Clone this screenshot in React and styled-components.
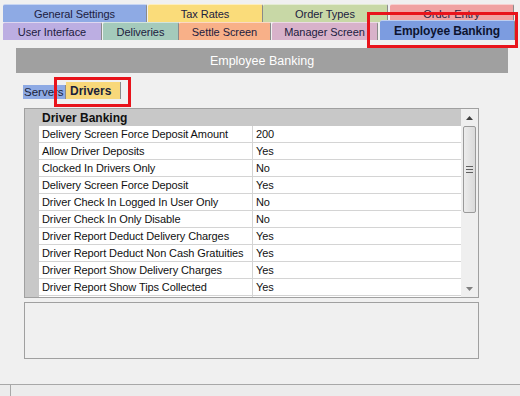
import React from "react";
import styled, { createGlobalStyle } from "styled-components";

const GlobalStyle = createGlobalStyle`
  body {
    margin: 0;
    background: #f0f0f0;
    font-family: "Liberation Sans", Arial, sans-serif;
  }
`;

const Page = styled.div`
  width: 520px;
  height: 396px;
  overflow: hidden;
  background: #f0f0f0;
  display: flex;
  flex-direction: column;
  position: relative;
`;

const TabStrip = styled.div`
  padding: 4px 0 0 3px;
  display: flex;
  flex-direction: column;
`;

const TabRow = styled.div`
  display: flex;
  align-items: flex-end;
  height: 18px;
`;

const Tab = styled.div`
  box-sizing: border-box;
  width: ${p => p.w}px;
  margin-left: ${p => p.gap || 0}px;
  height: ${p => (p.active ? 20 : 18)}px;
  margin-top: ${p => (p.active ? -2 : 0)}px;
  background: ${p => p.bg};
  border-right: 1px solid #8a8a8a;
  border-top: 1px solid rgba(255, 255, 255, 0.5);
  border-radius: 2px 2px 0 0;
  display: flex;
  align-items: center;
  justify-content: center;
  font-size: ${p => (p.active ? 12 : 11)}px;
  letter-spacing: ${p => (p.active ? "-0.1px" : "-0.05px")};
  font-weight: ${p => (p.active ? "bold" : "normal")};
  color: ${p => (p.active ? "#0d1430" : "#1c2040")};
  white-space: nowrap;
`;

const Marker = styled.div`
  position: absolute;
  left: ${p => p.x}px;
  top: ${p => p.y}px;
  width: ${p => p.w}px;
  height: ${p => p.h}px;
  border: 3px solid #e8131b;
  box-sizing: border-box;
  pointer-events: none;
`;

const Body = styled.div`
  padding: 8px 12px 0 16px;
  display: flex;
  flex-direction: column;
`;

const TitleBar = styled.div`
  height: 25px;
  background: #a0a0a0;
  color: #fff;
  font-size: 12.5px;
  display: flex;
  align-items: center;
  justify-content: center;
`;

const SubTabs = styled.div`
  margin: 9px 0 0 7px;
  display: flex;
  align-items: flex-end;
  height: 17px;
`;

const SubTab = styled.div`
  box-sizing: border-box;
  width: ${p => p.w}px;
  height: ${p => (p.active ? 17 : 14)}px;
  background: ${p => p.bg};
  border-right: 1px solid #8a8a8a;
  font-size: ${p => (p.active ? 12 : 11.5)}px;
  font-weight: ${p => (p.active ? "bold" : "normal")};
  color: #1a1f3a;
  display: flex;
  align-items: center;
  padding-left: ${p => (p.active ? 4 : 1)}px;
  white-space: nowrap;
  overflow: hidden;
`;

const Grid = styled.div`
  margin: 9px 0 0 8px;
  width: 455px;
  height: 190px;
  box-sizing: border-box;
  border: 1px solid #a0a0a0;
  display: flex;
  background: #fff;
  overflow: hidden;
`;

const Gutter = styled.div`
  width: 14px;
  background: #c8c8c8;
  flex-shrink: 0;
`;

const Cells = styled.div`
  flex: 1;
  display: flex;
  flex-direction: column;
`;

const HeaderRow = styled.div`
  height: 17px;
  background: #c8c8c8;
  font-size: 12px;
  font-weight: bold;
  color: #111;
  display: flex;
  align-items: center;
  padding-left: 3px;
  flex-shrink: 0;
`;

const Row = styled.div`
  height: 17px;
  box-sizing: border-box;
  border-bottom: 1px solid #d4d4d4;
  display: grid;
  grid-template-columns: 214px 1fr;
  font-size: 11px;
  letter-spacing: -0.1px;
  color: #111;
  flex-shrink: 0;
`;

const Cell = styled.div`
  padding-left: 3px;
  border-right: ${p => (p.value ? "none" : "1px solid #d4d4d4")};
  display: flex;
  align-items: center;
  white-space: nowrap;
  overflow: hidden;
`;

const ScrollBar = styled.div`
  width: 17px;
  flex-shrink: 0;
  background: #efefef;
  display: flex;
  flex-direction: column;
  align-items: center;
`;

const Arrow = styled.div`
  height: 17px;
  width: 17px;
  display: flex;
  align-items: center;
  justify-content: center;
  flex-shrink: 0;
`;

const Thumb = styled.div`
  width: 13px;
  height: 87px;
  box-sizing: border-box;
  border: 1px solid #9a9a9a;
  border-radius: 2px;
  background: linear-gradient(to right, #ececec, #dadada);
  display: flex;
  align-items: center;
  justify-content: center;
`;

const Track = styled.div`
  flex: 1;
`;

const Notes = styled.div`
  margin: 4px 0 0 8px;
  width: 455px;
  height: 57px;
  box-sizing: border-box;
  border: 1px solid #a0a0a0;
`;

const StatusBar = styled.div`
  position: absolute;
  left: 0;
  right: 0;
  bottom: 0;
  height: 11px;
  border-top: 1px solid #a8a8a8;
  background: #ececec;
  display: flex;
`;

const StatusCell = styled.div`
  width: 10px;
  border-right: 1px solid #a8a8a8;
`;

const topTabs = [
  { label: "General Settings", w: 144, bg: "#8eaae4" },
  { label: "Tax Rates", w: 115, bg: "#fadc7a", gap: 1 },
  { label: "Order Types", w: 125, bg: "#c8d8a6" },
  { label: "Order Entry", w: 124, bg: "#f0a2a2", gap: 2 },
];

const bottomTabs = [
  { label: "User Interface", w: 99, bg: "#bcaee2" },
  { label: "Deliveries", w: 76, bg: "#a4cabb", gap: 1 },
  { label: "Settle Screen", w: 92, bg: "#f8b088" },
  { label: "Manager Screen", w: 106, bg: "#d8b2ca", gap: 1 },
  { label: "Employee Banking", w: 135, bg: "#7c9ce0", gap: 2, active: true },
];

const rows = [
  ["Delivery Screen Force Deposit Amount", "200"],
  ["Allow Driver Deposits", "Yes"],
  ["Clocked In Drivers Only", "No"],
  ["Delivery Screen Force Deposit", "Yes"],
  ["Driver Check In Logged In User Only", "No"],
  ["Driver Check In Only Disable", "No"],
  ["Driver Report Deduct Delivery Charges", "Yes"],
  ["Driver Report Deduct Non Cash Gratuities", "Yes"],
  ["Driver Report Show Delivery Charges", "Yes"],
  ["Driver Report Show Tips Collected", "Yes"],
  ["", ""],
];

const UpIcon = () => (
  <svg width="7" height="4" viewBox="0 0 7 4">
    <path d="M0 4 L3.5 0 L7 4 Z" fill="#404040" />
  </svg>
);

const DownIcon = () => (
  <svg width="7" height="4" viewBox="0 0 7 4">
    <path d="M0 0 L3.5 4 L7 0 Z" fill="#808080" />
  </svg>
);

const Grip = () => (
  <svg width="7" height="7" viewBox="0 0 7 7">
    <path d="M0 0.5 H7 M0 3.5 H7 M0 6.5 H7" stroke="#606060" strokeWidth="1" />
  </svg>
);

export default function App() {
  return (
    <Page>
      <GlobalStyle />
      <TabStrip>
        <TabRow>
          {topTabs.map(t => (
            <Tab key={t.label} w={t.w} bg={t.bg} gap={t.gap}>
              {t.label}
            </Tab>
          ))}
        </TabRow>
        <TabRow>
          {bottomTabs.map(t => (
            <Tab key={t.label} w={t.w} bg={t.bg} gap={t.gap} active={t.active}>
              {t.label}
            </Tab>
          ))}
        </TabRow>
      </TabStrip>
      <Body>
        <TitleBar>Employee Banking</TitleBar>
        <SubTabs>
          <SubTab w={43} bg="#8eaae4">Servers</SubTab>
          <SubTab w={55} bg="#f8d87a" active>Drivers</SubTab>
        </SubTabs>
        <Grid>
          <Gutter />
          <Cells>
            <HeaderRow>Driver Banking</HeaderRow>
            {rows.map(([name, value], i) => (
              <Row key={i}>
                <Cell>{name}</Cell>
                <Cell value>{value}</Cell>
              </Row>
            ))}
          </Cells>
          <ScrollBar>
            <Arrow><UpIcon /></Arrow>
            <Thumb><Grip /></Thumb>
            <Track />
            <Arrow><DownIcon /></Arrow>
          </ScrollBar>
        </Grid>
        <Notes />
      </Body>
      <StatusBar>
        <StatusCell />
      </StatusBar>
      <Marker x={367} y={12} w={151} h={36} />
      <Marker x={54} y={77} w={77} h={30} />
    </Page>
  );
}
